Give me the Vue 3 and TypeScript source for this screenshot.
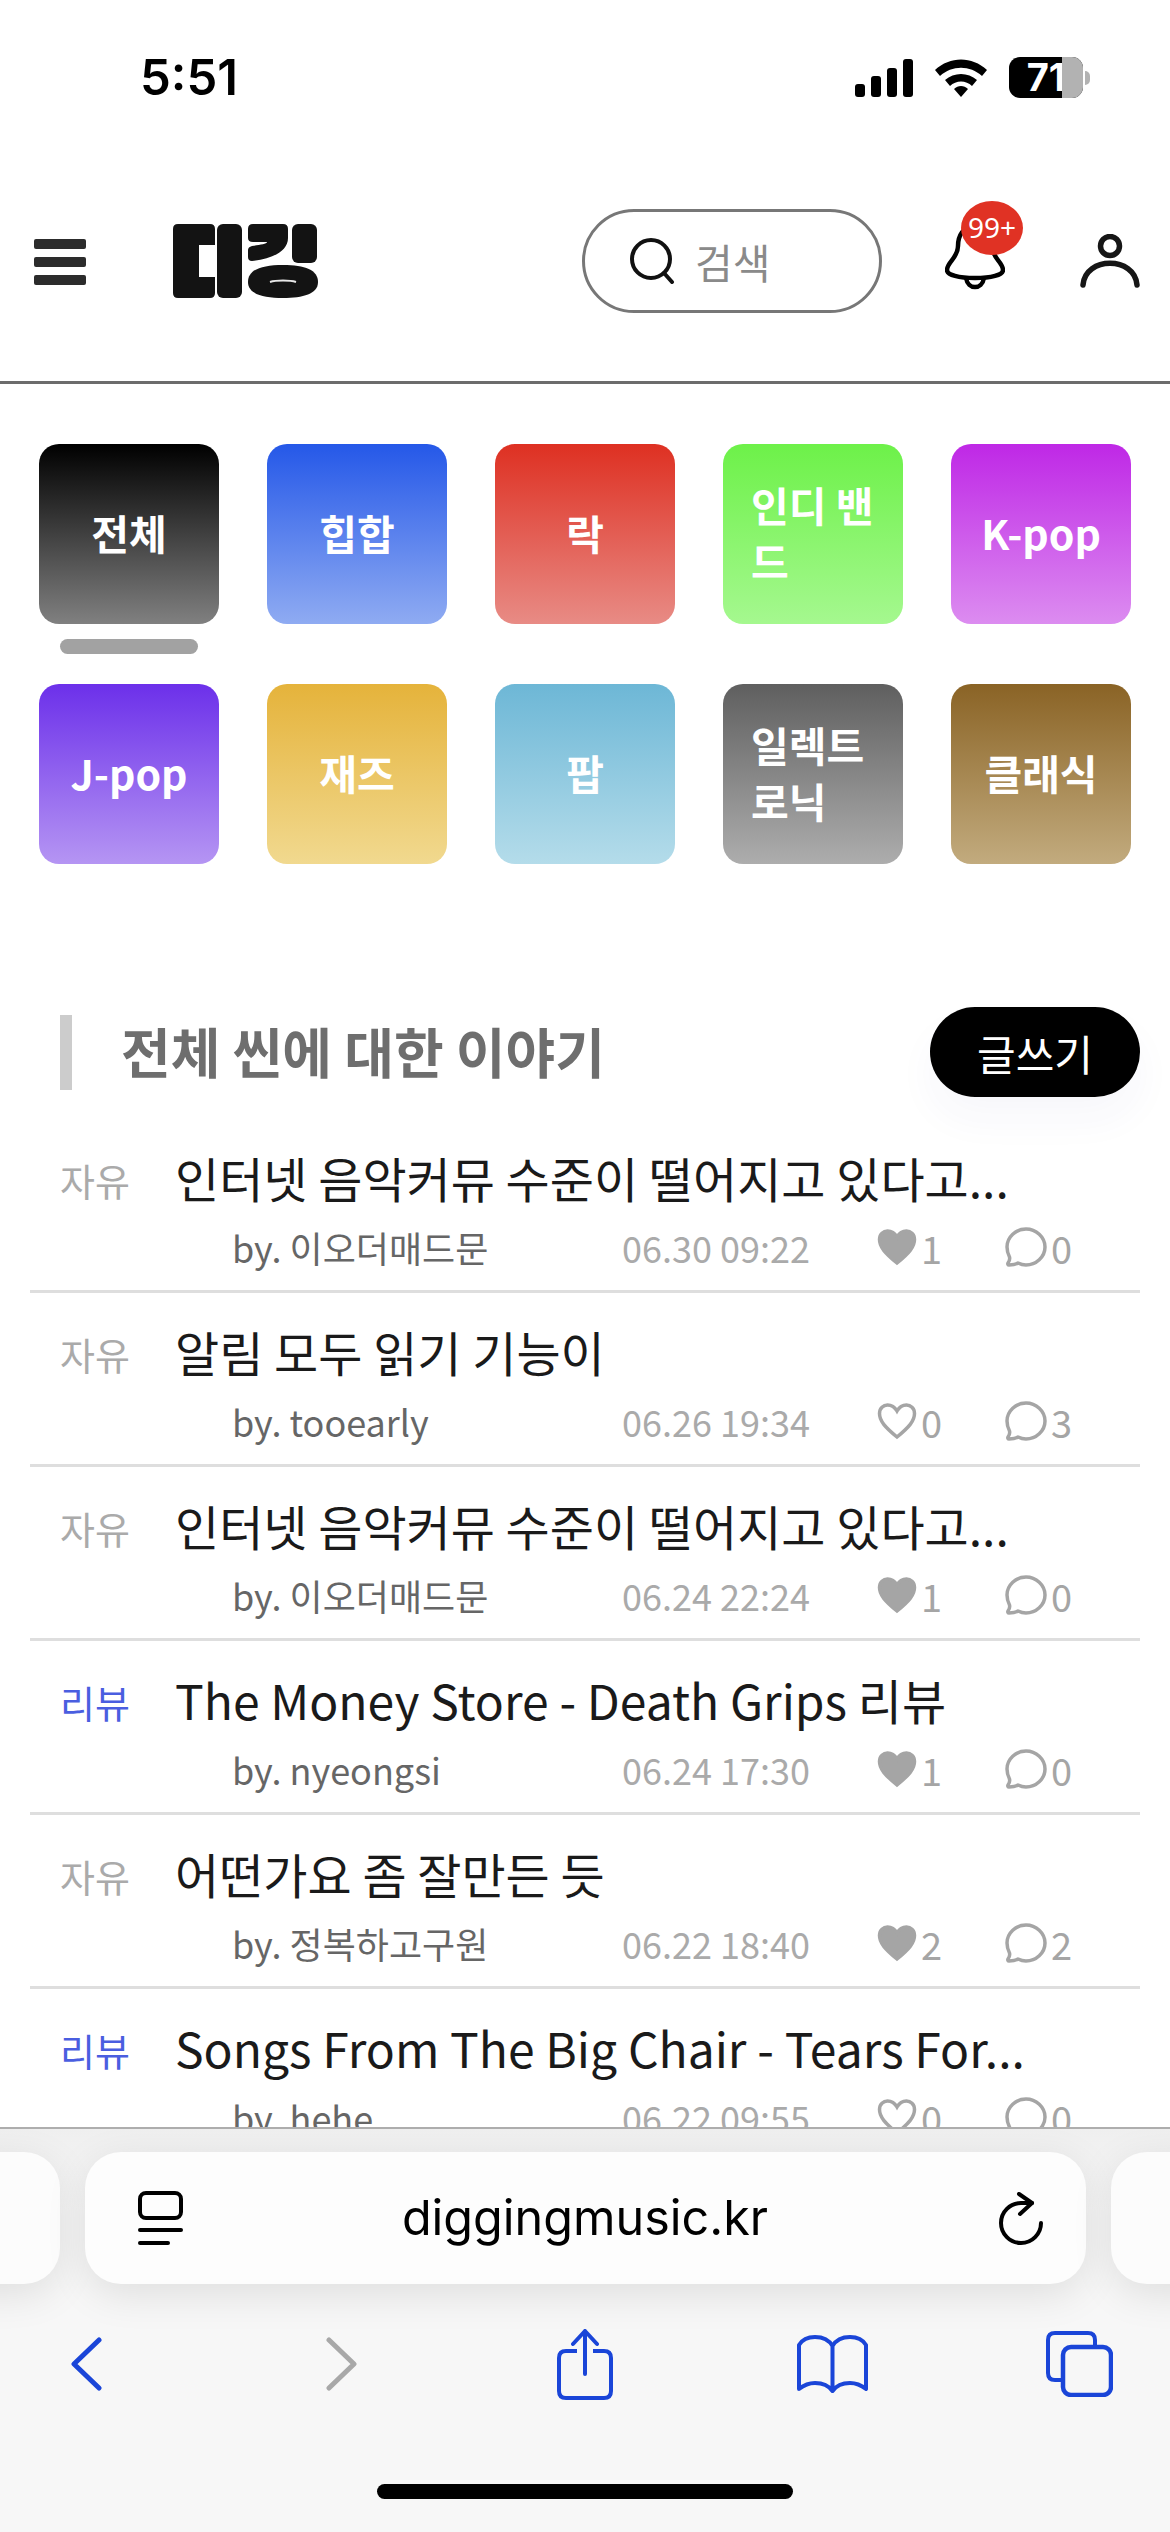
<script setup lang="ts">
interface Cat { name: string; bg: string; wrap?: boolean }
interface Post { tag: string; title: string; by: string; date: string; likes: number; liked: boolean; comments: number }
const cats: Cat[] = [
  { name: '전체', bg: 'linear-gradient(#000, #808080)' },
  { name: '힙합', bg: 'linear-gradient(#2558e8, #8fabf2)' },
  { name: '락', bg: 'linear-gradient(#de3022, #e88b85)' },
  { name: '인디 밴드', bg: 'linear-gradient(#6df149, #a5f88f)', wrap: true },
  { name: 'K-pop', bg: 'linear-gradient(#bf28e6, #dc8cf0)' },
  { name: 'J-pop', bg: 'linear-gradient(#6c30ea, #b595f3)' },
  { name: '재즈', bg: 'linear-gradient(#e5b33b, #f1d98f)' },
  { name: '팝', bg: 'linear-gradient(#6db7d6, #b4dcea)' },
  { name: '일렉트 로닉', bg: 'linear-gradient(#5f5f5f, #adadad)', wrap: true },
  { name: '클래식', bg: 'linear-gradient(#8a6325, #c2ab7e)' },
]
const posts: Post[] = [
  { tag: '자유', title: '인터넷 음악커뮤 수준이 떨어지고 있다고...', by: 'by. 이오더매드문', date: '06.30 09:22', likes: 1, liked: true, comments: 0 },
  { tag: '자유', title: '알림 모두 읽기 기능이', by: 'by. tooearly', date: '06.26 19:34', likes: 0, liked: false, comments: 3 },
  { tag: '자유', title: '인터넷 음악커뮤 수준이 떨어지고 있다고...', by: 'by. 이오더매드문', date: '06.24 22:24', likes: 1, liked: true, comments: 0 },
  { tag: '리뷰', title: 'The Money Store - Death Grips 리뷰', by: 'by. nyeongsi', date: '06.24 17:30', likes: 1, liked: true, comments: 0 },
  { tag: '자유', title: '어떤가요 좀 잘만든 듯', by: 'by. 정복하고구원', date: '06.22 18:40', likes: 2, liked: true, comments: 2 },
  { tag: '리뷰', title: 'Songs From The Big Chair - Tears For...', by: 'by. hehe', date: '06.22 09:55', likes: 0, liked: false, comments: 0 },
]
const heart = 'M20 35C8 25 2.500 19 2.500 11.500C2.500 6 6.500 3 10.500 3C14.500 3 18 5.500 20 9C22 5.500 25.500 3 29.500 3C33.500 3 37.500 6 37.500 11.500C37.500 19 32 25 20 35Z'
</script>

<template>
  <div class="phone">
    <div class="page">
      <div class="status">
        <span class="time">5:51</span>
        <div class="status-icons">
          <svg width="58" height="38" viewBox="0 0 58 38"><rect x="0" y="25" width="10" height="13" rx="3"/><rect x="16" y="17" width="10" height="21" rx="3"/><rect x="32" y="9" width="10" height="29" rx="3"/><rect x="48" y="0" width="10" height="38" rx="3"/></svg>
          <svg width="52" height="38" viewBox="0 0 52 38"><path d="M0 11C15-3 37-3 52 11L47 17C35 6 17 6 5 17Z"/><path d="M10 21C19 13 33 13 42 21L37 27C31 21 21 21 15 27Z"/><path d="M19 30C23 26 29 26 33 30L26 38Z"/></svg>
          <div class="battery"><span class="bat-fill"><span class="bat-num">71</span><span class="bat-empty"></span></span><span class="bat-cap"></span></div>
        </div>
      </div>

      <header class="topbar">
        <div class="burger"><i></i><i></i><i></i></div>
        <svg class="logo" width="146" height="74" viewBox="0 0 146 74">
          <path fill="#131313" d="M5 0H37Q42 0 42 5V21H26V53H42V69Q42 74 37 74H5Q0 74 0 69V5Q0 0 5 0Z"/>
          <rect x="44" y="0" width="25" height="74" rx="6" fill="#131313"/>
          <path fill="#131313" d="M80 0H110Q115 0 115 5V14C115 28 98 35 79 37Q75 37 75 33V26Q75 23 79 22C86 21 94 20 94 18H80Q75 18 75 14V5Q75 0 80 0Z"/>
          <rect x="119" y="0" width="25" height="39" rx="6" fill="#131313"/>
          <path fill="#131313" d="M110 41C132 41 145 46 145 58C145 70 130 74 110 74C90 74 75 70 75 58C75 46 88 41 110 41Z"/>
          <path fill="none" stroke="#e8e8e8" stroke-width="2" d="M97 58C103 56 117 56 123 58"/>
        </svg>
        <div class="search">
          <svg width="46" height="46" viewBox="0 0 46 46"><circle cx="21" cy="21" r="19" fill="none" stroke="#111" stroke-width="4"/><path d="M34 35L42 44" stroke="#111" stroke-width="4" stroke-linecap="round"/></svg>
          <span class="search-text">검색</span>
        </div>
        <div class="bell">
          <svg width="60" height="66" viewBox="0 0 60 66"><path fill="none" stroke="#000" stroke-width="4.500" stroke-linejoin="round" d="M30 2C18 2 13 12 13 22C13 34 2 38 2 46C2 51 14 54 30 54C46 54 58 51 58 46C58 38 47 34 47 22C47 12 42 2 30 2Z"/><path fill="none" stroke="#000" stroke-width="4.500" d="M21 54C23 66 37 66 39 54"/></svg>
          <span class="badge">99+</span>
        </div>
        <svg class="person" width="60" height="54" viewBox="0 0 60 54"><circle cx="30" cy="12" r="9.500" fill="none" stroke="#161616" stroke-width="5.500"/><path d="M3 51C5 22 55 22 57 51" fill="none" stroke="#161616" stroke-width="5.500" stroke-linecap="round"/></svg>
      </header>

      <section class="cats">
        <div v-for="(c, i) in cats" :key="c.name" class="cat-cell">
          <div class="cat" :class="{ wrap: c.wrap }" :style="{ background: c.bg }">{{ c.name }}</div>
          <div v-if="i === 0" class="indicator"></div>
        </div>
      </section>

      <section class="head">
        <div class="head-title">전체 씬에 대한 이야기</div>
        <div class="write">글쓰기</div>
      </section>

      <ul class="list">
        <li v-for="(p, i) in posts" :key="i" class="post">
          <div class="line1">
            <span class="tag" :class="{ review: p.tag === '리뷰' }">{{ p.tag }}</span>
            <span class="title">{{ p.title }}</span>
          </div>
          <div class="line2">
            <span class="by">{{ p.by }}</span>
            <span class="date">{{ p.date }}</span>
            <span class="stat like">
              <svg width="40" height="38" viewBox="0 0 40 38"><path :d="heart" :fill="p.liked ? '#a5a5a5' : 'none'" stroke="#a5a5a5" stroke-width="3.500"/></svg>
              {{ p.likes }}
            </span>
            <span class="stat cmt">
              <svg width="42" height="40" viewBox="0 0 42 40"><path fill="none" stroke="#a5a5a5" stroke-width="3.500" stroke-linejoin="round" d="M21 2C31 2 40 10 40 20C40 30 31 38 21 38C18 38 15 37 13 36C10 38 7 38 4 38C3 38 2.500 37 3 36C4.500 34 5 32 4.500 30C3 27 2 24 2 20C2 10 11 2 21 2Z"/></svg>
              {{ p.comments }}
            </span>
          </div>
        </li>
      </ul>
    </div>

    <footer class="safari">
      <div class="url-row">
        <div class="side-tab"></div>
        <div class="url">
          <svg width="45" height="54" viewBox="0 0 45 54"><rect x="2" y="2" width="41" height="25" rx="6" fill="none" stroke="#000" stroke-width="4"/><rect x="0" y="37" width="45" height="4" rx="2"/><rect x="0" y="50" width="32" height="4" rx="2"/></svg>
          <span class="url-text">diggingmusic.kr</span>
          <svg width="44" height="53" viewBox="0 0 44 53"><path fill="none" stroke="#000" stroke-width="4" stroke-linecap="round" d="M33 11H22A20 20 0 1 0 42 31"/><path fill="none" stroke="#000" stroke-width="4" stroke-linecap="round" stroke-linejoin="round" d="M20 2L33 11L21 22"/></svg>
        </div>
        <div class="side-tab"></div>
      </div>
      <div class="tools">
        <svg class="t-back" width="31" height="54" viewBox="0 0 31 54"><path d="M28 3L3 27L28 51" fill="none" stroke="#1a45d8" stroke-width="5" stroke-linecap="round" stroke-linejoin="round"/></svg>
        <svg class="t-fwd" width="31" height="54" viewBox="0 0 31 54"><path d="M3 3L28 27L3 51" fill="none" stroke="#a8a8a8" stroke-width="5" stroke-linecap="round" stroke-linejoin="round"/></svg>
        <svg class="t-share" width="56" height="71" viewBox="0 0 56 71"><path d="M20 22H9Q2 22 2 29V62Q2 69 9 69H47Q54 69 54 62V29Q54 22 47 22H36" fill="none" stroke="#1a45d8" stroke-width="4"/><path d="M28 45V2M16 15L28 2L40 15" fill="none" stroke="#1a45d8" stroke-width="4" stroke-linecap="round" stroke-linejoin="round"/></svg>
        <svg class="t-book" width="71" height="58" viewBox="0 0 71 58"><path d="M35.500 11C32 5 25 2 18 2C11 2 5 5 2 10V54C7 50 12 48 18 48C25 48 32 51 35.500 56C39 51 46 48 53 48C59 48 64 50 69 54V10C66 5 60 2 53 2C46 2 39 5 35.500 11ZM35.500 11V56" fill="none" stroke="#1a45d8" stroke-width="4" stroke-linejoin="round"/></svg>
        <svg class="t-tabs" width="67" height="66" viewBox="0 0 67 66"><path d="M15 49H9Q2 49 2 42V9Q2 2 9 2H42Q49 2 49 9V14" fill="none" stroke="#1a45d8" stroke-width="4"/><rect x="17" y="16" width="48" height="48" rx="8" fill="none" stroke="#1a45d8" stroke-width="4.500"/></svg>
      </div>
      <div class="home"></div>
    </footer>
  </div>
</template>

<style>
html, body { margin: 0; background: #fff; }
</style>
<style scoped>
.phone { width: 1170px; height: 2532px; display: flex; flex-direction: column; overflow: hidden; background: #fff; font-family: "Noto Sans CJK KR", "Noto Sans", sans-serif; }
.page { height: 2127px; flex: none; overflow: hidden; background: #fff; }
.status { height: 150px; box-sizing: border-box; padding: 54px 80px 0 140px; display: flex; justify-content: space-between; align-items: flex-start; }
.time { font: 600 49px/48px Inter, "Liberation Sans", sans-serif; color: #000; }
.status-icons { display: flex; align-items: center; gap: 22px; padding-top: 3px; }
.battery { width: 81px; height: 41px; display: flex; align-items: center; }
.bat-fill { position: relative; width: 74px; height: 41px; border-radius: 11px; background: #000; display: block; overflow: hidden; flex: none; }
.bat-num { display: block; text-align: center; font: 700 38px/41px Inter, "Liberation Sans", sans-serif; color: #fff; white-space: nowrap; }
.bat-empty { position: absolute; right: 0; top: 0; bottom: 0; width: 21px; background: #b2b2b2; }
.bat-cap { width: 5px; height: 14px; margin-left: 2px; border-radius: 0 7px 7px 0; background: #b2b2b2; }
.topbar { height: 234px; flex: none; box-sizing: border-box; border-bottom: 3px solid #6c6c6c; padding-left: 34px; display: flex; align-items: flex-start; }
.burger { width: 52px; margin-top: 89px; display: flex; flex-direction: column; gap: 8px; }
.burger i { display: block; height: 10px; border-radius: 2px; background: #2c2c2c; }
.logo { margin: 74px 0 0 87px; }
.search { width: 300px; height: 104px; box-sizing: border-box; margin: 59px 0 0 263px; border: 3px solid #777; border-radius: 52px; display: flex; align-items: center; padding-left: 45px; gap: 19px; flex: none; }
.search-text { font-size: 41px; color: #8a8a8a; line-height: 1; }
.bell { position: relative; width: 60px; height: 66px; margin: 74px 0 0 63px; flex: none; }
.badge { position: absolute; left: 16px; top: -23px; width: 62px; height: 54px; border-radius: 50%; background: #e03224; color: #fff; font: 400 28px/52px "Noto Sans", sans-serif; text-align: center; }
.person { margin: 84px 0 0 75px; flex: none; }
.cats { display: grid; grid-template-columns: repeat(5, 180px); column-gap: 48px; row-gap: 60px; padding: 60px 0 0 39px; }
.cat-cell { position: relative; height: 180px; }
.cat { height: 180px; box-sizing: border-box; padding-bottom: 4px; border-radius: 20px; display: flex; align-items: center; justify-content: center; font-size: 41px; font-weight: 700; color: #fff; line-height: 54px; text-align: center; }
.cat.wrap { justify-content: flex-start; text-align: left; padding: 0 28px 4px; line-height: 56px; }
.indicator { position: absolute; left: 21px; top: 195px; width: 138px; height: 15px; border-radius: 8px; background: #a2a2a2; }
.head { display: flex; align-items: center; justify-content: space-between; margin-top: 143px; padding: 0 30px 0 60px; height: 90px; }
.head-title { border-left: 12px solid #ccc; padding-left: 49px; height: 75px; line-height: 72px; font-size: 54px; font-weight: 700; color: #6e6e6e; white-space: nowrap; }
.write { width: 210px; height: 90px; border-radius: 45px; background: #000; color: #fff; font-size: 42px; display: flex; align-items: center; justify-content: center; box-shadow: 0 22px 40px rgba(60, 60, 160, 0.04); }
.list { list-style: none; margin: 22px 30px 0; padding: 0; }
.post { height: 174px; box-sizing: border-box; padding-top: 8px; border-bottom: 3px solid #dedede; }
.post:last-child { border-bottom: 0; }
.line1 { display: flex; align-items: center; height: 100px; padding-left: 30px; }
.tag { width: 115px; flex: none; font-size: 38px; color: #aaa; padding-top: 4px; }
.tag.review { color: #4a5ee0; }
.title { font-size: 48px; color: #1a1a1a; white-space: nowrap; }
.line2 { display: flex; align-items: center; height: 40px; padding-left: 202px; }
.by { width: 390px; flex: none; font-size: 36px; color: #666; white-space: nowrap; }
.date { width: 255px; flex: none; font-size: 36px; color: #aaa; white-space: nowrap; }
.stat { display: flex; align-items: center; gap: 4px; font-size: 38px; color: #a5a5a5; }
.like { width: 128px; flex: none; }
.safari { flex: 1; border-top: 2px solid #aeaeae; background: linear-gradient(#efefef, #f7f7f7 20%, #f7f7f7); display: flex; flex-direction: column; }
.url-row { display: flex; gap: 25px; margin-top: 23px; margin-left: -400px; width: 1970px; }
.side-tab { width: 460px; height: 132px; background: #fcfcfc; border-radius: 36px; box-shadow: 0 10px 40px rgba(0,0,0,.1); flex: none; }
.url { width: 1001px; height: 132px; flex: none; box-sizing: border-box; border-radius: 36px; background: #fdfdfd; box-shadow: 0 10px 40px rgba(0,0,0,.1); display: flex; align-items: center; padding: 0 43px 0 53px; }
.url-text { flex: 1; text-align: center; padding-right: 12px; font: 400 48.500px/1 Inter, "Liberation Sans", sans-serif; color: #000; }
.tools { display: flex; align-items: center; padding-left: 71px; height: 120px; margin-top: 20px; }
.t-fwd { margin-left: 224px; }
.t-share { margin-left: 200px; }
.t-book { margin-left: 184px; }
.t-tabs { margin-left: 178px; }
.home { width: 416px; height: 15px; border-radius: 8px; background: #000; margin: 60px auto 0; }
</style>
